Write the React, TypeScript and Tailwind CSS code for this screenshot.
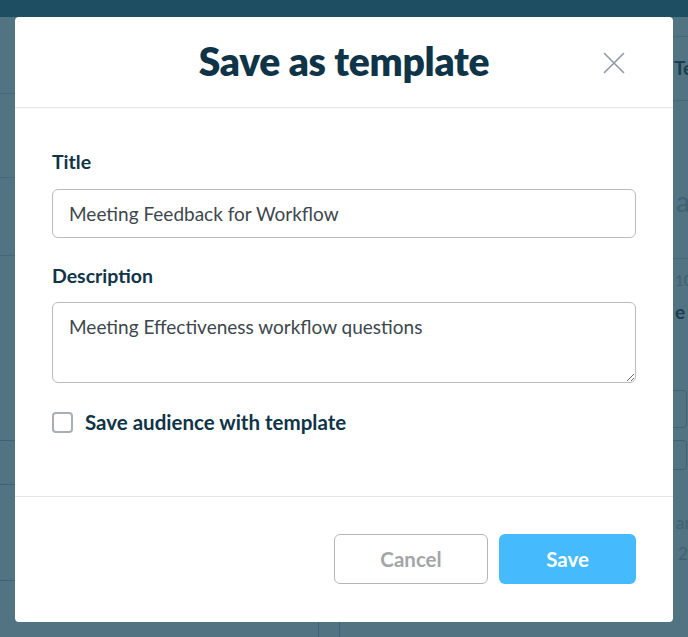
import { useState } from 'react';

export default function App() {
  const [title, setTitle] = useState('Meeting Feedback for Workflow');
  const [description, setDescription] = useState('Meeting Effectiveness workflow questions');
  const [keepAudience, setKeepAudience] = useState(false);

  const font = { fontFamily: 'Lato, "Open Sans", sans-serif' };
  const fieldCls =
    'w-full border border-[#b9bdc0] rounded-[6px] px-[16px] text-[19px] text-[#3d474d] bg-white focus:outline-none';
  const labelCls = 'block text-[19.5px] font-bold text-[#0f3447] leading-[22px]';

  return (
    <div className="relative w-[688px] h-[637px] overflow-hidden bg-[#527382] flex flex-col" style={font}>
      {/* Page behind the overlay */}
      <div className="h-[17px] shrink-0 bg-[#1d4e62]" />
      <div className="flex-1 flex justify-between">
        <div className="w-[15px] flex flex-col">
          <div className="h-[77px] border-b border-[#46687a]" />
          <div className="h-[84px] border-b border-[#46687a]" />
          <div className="h-[78px] border-b border-[#46687a]" />
          <div className="h-[185px] border-b border-[#3f6173]" />
          <div className="h-[44px] border-b border-[#3f6173]" />
          <div className="h-[96px] border-b border-[#3f6173]" />
        </div>
        <div className="flex-1 flex items-end justify-center">
          <div className="h-[15px] w-[22px] border-x border-[#3f6173] -ml-[30px]" />
        </div>
        <div className="w-[15px] flex flex-col text-[#3f6273] overflow-hidden whitespace-nowrap">
          <div className="h-[20px] border-b border-[#46687a]" />
          <div className="h-[64px] border-b border-[#46687a] flex items-center pl-[1px] text-[19px] font-bold text-[#173f50]">Te</div>
          <div className="h-[158px] border-b border-[#46687a] flex items-center pl-[3px] text-[28px] pt-[42px]">a</div>
          <div className="pt-[12px] pl-[2px] text-[15px] leading-[18px]">10</div>
          <div className="pt-[12px] pl-[2px] text-[19px] font-bold text-[#173f50] leading-[22px]">e</div>
          <div className="mt-[67px] ml-[-4px] w-[18px] h-[38px] border border-[#3f6273] rounded-[4px]" />
          <div className="mt-[12px] ml-[-4px] w-[18px] h-[30px] border border-[#3f6273] rounded-[4px]" />
          <div className="pt-[42px] pl-[3px] text-[17px] leading-[22px]">ar</div>
          <div className="pt-[9px] pl-[5px] text-[17px] leading-[22px]">2</div>
        </div>
      </div>

      {/* Dialog */}
      <div className="absolute left-[15px] top-[17px] w-[658px] h-[605px] bg-white rounded-[4px] flex flex-col">
        <div className="relative h-[91px] flex items-center justify-center border-b border-[#e4e7ea]">
          <h2 className="text-[39px] font-extrabold text-[#0f3447] tracking-[-0.3px] -mt-[2px]">Save as template</h2>
          <button className="absolute right-[47px] top-[34px] w-[24px] h-[24px] flex items-center justify-center">
            <svg width="22" height="22" viewBox="0 0 22 22" fill="none" stroke="#8b9aa3" strokeWidth="1.6" strokeLinecap="round">
              <path d="M1.5 1.5 20.5 20.5M20.5 1.5 1.5 20.5" />
            </svg>
          </button>
        </div>

        <div className="flex-1 px-[37px] pt-[43px]">
          <label className={`${labelCls} mb-[16px]`}>Title</label>
          <input
            value={title}
            onChange={(e) => setTitle(e.target.value)}
            className={`${fieldCls} h-[49px]`}
          />

          <label className={`${labelCls} mt-[27px] mb-[15px]`}>Description</label>
          <textarea
            value={description}
            onChange={(e) => setDescription(e.target.value)}
            className={`${fieldCls} h-[81px] pt-[10px] block resize-y`}
          />

          <label className="flex items-center gap-[12px] mt-[27px] cursor-pointer">
            <input
              type="checkbox"
              checked={keepAudience}
              onChange={(e) => setKeepAudience(e.target.checked)}
              className="appearance-none w-[21px] h-[21px] border-2 border-[#a9afb3] rounded-[4px] bg-white checked:bg-[#45bbfd] checked:border-[#45bbfd]"
            />
            <span className="text-[20.5px] font-bold text-[#0f3447] leading-[24px]">Save audience with template</span>
          </label>
        </div>

        <div className="h-[126px] border-t border-[#e4e7ea] flex justify-end items-start gap-[11px] pr-[37px] pt-[37px]">
          <button className="w-[154px] h-[50px] rounded-[6px] border border-[#b3b6b8] text-[#a3a6a8] text-[20.5px] font-bold">
            Cancel
          </button>
          <button className="w-[137px] h-[50px] rounded-[6px] bg-[#45bbfd] text-white text-[20.5px] font-bold">
            Save
          </button>
        </div>
      </div>
    </div>
  );
}
